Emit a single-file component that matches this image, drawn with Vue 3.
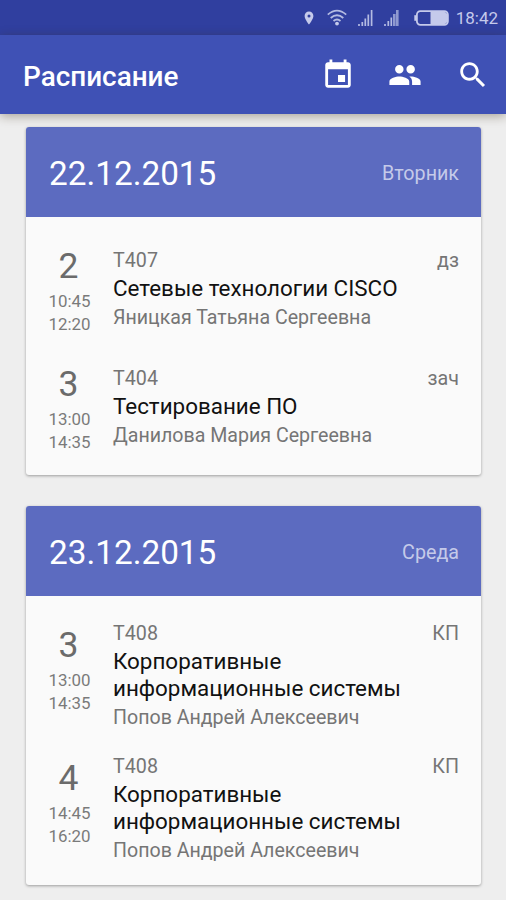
<template>
  <div class="screen">
    <div class="status">
      <svg class="pin" width="10" height="14" viewBox="0 0 10 14">
        <path
          d="M5 .5C2.500.5.6 2.400.6 4.900c0 3.100 4.400 8.600 4.400 8.600s4.400-5.500 4.400-8.600C9.400 2.400 7.500.5 5 .5zm0 6a1.500 1.500 0 1 1 0-3 1.500 1.500 0 0 1 0 3z"
        />
      </svg>
      <svg class="wifi" width="20" height="17" viewBox="0 0 20 17">
        <path d="M.8 5.600Q10-2.400 19.200 5.600M3.700 9Q10 3.600 16.300 9M6.500 12Q10 9 13.500 12" />
        <circle cx="10" cy="14.600" r="1.900" />
      </svg>
      <svg class="signal" width="15" height="18" viewBox="0 0 15 18">
        <path d="M1 15v2M4.300 13v4M7.300 9.500V17M10.300 5.500V17" />
        <path d="M13.600 1v16" />
      </svg>
      <svg class="signal second" width="15" height="18" viewBox="0 0 15 18">
        <path d="M1 15v2M4.300 12v5M7.300 8.500V17" />
        <path class="wide" d="M10.300 5v12M13.300 1v16" />
      </svg>
      <svg class="battery" width="35" height="16" viewBox="0 0 35 16">
        <rect x="2.900" y="1.200" width="31" height="13.600" rx="3.500" />
        <path d="M1.200 5.200v5.600" />
        <path class="level" d="M16.500 2h14q2.500 0 2.500 2v8q0 2-2.500 2h-14z" />
      </svg>
      <span class="clock">18:42</span>
    </div>

    <header class="toolbar">
      <h1>Расписание</h1>
      <svg class="icon calendar" viewBox="0 0 24 24">
        <path
          d="M17 12h-5v5h5v-5zM16 1v2H8V1H6v2H5c-1.110 0-1.990.9-1.990 2L3 19c0 1.100.89 2 2 2h14c1.100 0 2-.9 2-2V5c0-1.100-.9-2-2-2h-1V1h-2zm3 18H5V8h14v11z"
        />
      </svg>
      <svg class="icon people" viewBox="0 0 24 24">
        <path
          d="M16 11c1.660 0 2.990-1.340 2.990-3S17.660 5 16 5c-1.660 0-3 1.340-3 3s1.340 3 3 3zm-8 0c1.660 0 2.990-1.340 2.990-3S9.660 5 8 5C6.340 5 5 6.340 5 8s1.340 3 3 3zm0 2c-2.330 0-7 1.170-7 3.500V19h14v-2.500c0-2.330-4.670-3.500-7-3.500zm8 0c-.29 0-.62.02-.97.05 1.160.84 1.970 1.970 1.970 3.450V19h6v-2.500c0-2.330-4.670-3.500-7-3.500z"
        />
      </svg>
      <svg class="icon search" viewBox="0 0 24 24">
        <path
          d="M15.500 14h-.79l-.28-.27C15.410 12.590 16 11.110 16 9.500 16 5.910 13.090 3 9.500 3S3 5.910 3 9.500 5.910 16 9.500 16c1.610 0 3.090-.59 4.230-1.570l.27.28v.79l5 4.990L20.490 19l-4.990-5zm-6 0C7.010 14 5 11.990 5 9.500S7.010 5 9.500 5 14 7.010 14 9.500 11.990 14 9.500 14z"
        />
      </svg>
    </header>

    <main class="days">
      <section v-for="day in days" :key="day.date" class="card">
        <div class="card-head">
          <span class="date">{{ day.date }}</span>
          <span class="weekday">{{ day.weekday }}</span>
        </div>
        <div class="lessons">
          <div v-for="lesson in day.lessons" :key="lesson.number" class="lesson">
            <div class="when">
              <span class="number">{{ lesson.number }}</span>
              <span class="time">{{ lesson.start }}</span>
              <span class="time">{{ lesson.end }}</span>
            </div>
            <div class="info">
              <div class="top">
                <span>{{ lesson.room }}</span>
                <span>{{ lesson.type }}</span>
              </div>
              <div class="subject">{{ lesson.subject }}</div>
              <div class="teacher">{{ lesson.teacher }}</div>
            </div>
          </div>
        </div>
      </section>
    </main>
  </div>
</template>

<script setup>
import { ref } from "vue";

const days = ref([
  {
    date: "22.12.2015",
    weekday: "Вторник",
    lessons: [
      {
        number: 2,
        start: "10:45",
        end: "12:20",
        room: "Т407",
        type: "дз",
        subject: "Сетевые технологии CISCO",
        teacher: "Яницкая Татьяна Сергеевна",
      },
      {
        number: 3,
        start: "13:00",
        end: "14:35",
        room: "Т404",
        type: "зач",
        subject: "Тестирование ПО",
        teacher: "Данилова Мария Сергеевна",
      },
    ],
  },
  {
    date: "23.12.2015",
    weekday: "Среда",
    lessons: [
      {
        number: 3,
        start: "13:00",
        end: "14:35",
        room: "Т408",
        type: "КП",
        subject: "Корпоративные информационные системы",
        teacher: "Попов Андрей Алексеевич",
      },
      {
        number: 4,
        start: "14:45",
        end: "16:20",
        room: "Т408",
        type: "КП",
        subject: "Корпоративные информационные системы",
        teacher: "Попов Андрей Алексеевич",
      },
    ],
  },
]);
</script>

<style>
body {
  margin: 0;
  background: #eeeeee;
}
</style>

<style scoped>
* {
  box-sizing: border-box;
}
.screen {
  height: 900px;
  overflow: hidden;
  display: flex;
  flex-direction: column;
  background: #eeeeee;
  font-family: Roboto, "Noto Sans", sans-serif;
}
.status {
  flex: none;
  height: 35px;
  padding-right: 8px;
  display: flex;
  align-items: center;
  justify-content: flex-end;
  background: #303f9f;
  color: #c5caeb;
}
.status svg {
  flex: none;
  fill: #c5caeb;
}
.wifi {
  margin-left: 13px;
}
.wifi path {
  fill: none;
  stroke: #b4bbe2;
  stroke-width: 1.8;
}
.signal {
  margin-left: 11px;
}
.signal path {
  stroke: #b4bbe2;
  stroke-width: 1.7;
}
.signal .wide {
  stroke-width: 2.6;
  stroke: #8f99d0;
}
.battery {
  margin-left: 15px;
}
.battery rect {
  fill: none;
  stroke: #c5caeb;
  stroke-width: 1.8;
}
.battery path {
  stroke: #c5caeb;
  stroke-width: 1.8;
}
.battery .level {
  stroke: none;
}
.clock {
  margin-left: 7px;
  font-size: 17px;
  line-height: 20px;
  padding-top: 1px;
}
.toolbar {
  flex: none;
  height: 79px;
  padding: 0 16px 0 23px;
  display: flex;
  align-items: center;
  background: #3f51b5;
  color: #fff;
  position: relative;
  box-shadow: 0 2px 10px rgba(60, 45, 20, 0.4);
}
.toolbar h1 {
  flex: 1;
  margin: 0;
  padding-top: 4px;
  font-size: 27.9px;
  font-weight: 500;
  line-height: 32px;
}
.icon {
  flex: none;
  width: 34px;
  height: 34px;
  fill: #fff;
}
.people {
  margin-left: 33px;
}
.search {
  margin-left: 34px;
}
.days {
  padding: 13px 25px 0 26px;
}
.card {
  margin-bottom: 31px;
  border-radius: 3px;
  overflow: hidden;
  background: #fafafa;
  box-shadow: 0 1px 3px rgba(0, 0, 0, 0.35);
}
.card-head {
  height: 90px;
  padding: 3px 22px 0 23px;
  display: flex;
  align-items: center;
  justify-content: space-between;
  background: #5c6bc0;
}
.date {
  font-size: 33.3px;
  line-height: 40px;
  color: #fff;
}
.weekday {
  font-size: 19.7px;
  line-height: 23px;
  color: #c5cae9;
}
.lessons {
  padding: 26px 22px 22.4px 23px;
  display: flex;
  flex-direction: column;
  gap: 26px;
}
.lesson {
  display: flex;
  align-items: center;
}
.when {
  flex: none;
  align-self: flex-start;
  width: 41px;
  height: 92px;
  padding-top: 5px;
  margin-right: 23px;
  display: flex;
  flex-direction: column;
  align-items: center;
  color: #6b6b6b;
}
.number {
  margin: 0 2px 6px 0;
  font-size: 35.5px;
  line-height: 36px;
}
.time {
  font-size: 16.9px;
  line-height: 23px;
  color: #7a7a7a;
}
.info {
  flex: 1;
}
.top {
  display: flex;
  justify-content: space-between;
  font-size: 19.7px;
  line-height: 23px;
  color: #757575;
}
.subject {
  max-width: 300px;
  margin: 3px 0 4px;
  font-size: 22.4px;
  line-height: 27px;
  color: #111;
}
.teacher {
  font-size: 19.6px;
  line-height: 23px;
  color: #757575;
}
</style>
